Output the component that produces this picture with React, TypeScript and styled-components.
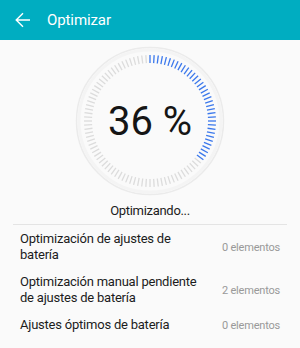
import React from "react";
import styled, { createGlobalStyle } from "styled-components";

const GlobalStyle = createGlobalStyle`
  html, body {
    margin: 0;
    padding: 0;
    background: #fafafa;
    font-family: Roboto, "Noto Sans", sans-serif;
  }
`;

const TICKS = 100;
const PROGRESS = 36;

const rows = [
  { label: "Optimización de ajustes de batería", count: "0 elementos" },
  { label: "Optimización manual pendiente de ajustes de batería", count: "2 elementos" },
  { label: "Ajustes óptimos de batería", count: "0 elementos" },
];

const Dial: React.FC<{ value: number }> = ({ value }) => {
  const lines = [];
  for (let i = 0; i < TICKS; i++) {
    const a = (i / TICKS) * Math.PI * 2;
    const s = Math.sin(a);
    const c = Math.cos(a);
    lines.push(
      <line
        key={i}
        x1={75 + s * 58}
        y1={75 - c * 58}
        x2={75 + s * 66}
        y2={75 - c * 66}
        stroke={i < value ? "#3b78ec" : "#dcdcdc"}
        strokeWidth={1.3}
      />
    );
  }
  return (
    <DialBox>
      <svg width="150" height="150" viewBox="0 0 150 150">
        <circle cx="75" cy="75" r="73.5" fill="none" stroke="#ebebeb" strokeWidth="1.5" />
        <circle cx="75" cy="75" r="71" fill="none" stroke="#f4f4f4" strokeWidth="3" />
        {lines}
      </svg>
      <Percent>{value} %</Percent>
    </DialBox>
  );
};

export default function App() {
  return (
    <>
      <GlobalStyle />
      <Page>
        <Header>
          <BackButton>
            <svg width="16" height="16" viewBox="0 0 16 16" fill="none">
              <path d="M15 8H1.5M8 1.2L1.2 8L8 14.8" stroke="#fff" strokeWidth="1.4" />
            </svg>
          </BackButton>
          <Title>Optimizar</Title>
        </Header>
        <DialSection>
          <Dial value={PROGRESS} />
          <Status>Optimizando...</Status>
        </DialSection>
        <Divider />
        <List>
          {rows.map((r) => (
            <Row key={r.label}>
              <Label>{r.label}</Label>
              <Count>{r.count}</Count>
            </Row>
          ))}
        </List>
      </Page>
    </>
  );
}

const Page = styled.div`
  width: 300px;
  height: 348px;
  overflow: hidden;
  background: #fafafa;
`;

const Header = styled.div`
  height: 40px;
  background: #00adc1;
  display: flex;
  align-items: center;
  padding-left: 15px;
  box-sizing: border-box;
`;

const BackButton = styled.div`
  width: 16px;
  height: 16px;
  display: flex;
`;

const Title = styled.div`
  margin-left: 16px;
  color: #fff;
  font-size: 15px;
  letter-spacing: -0.1px;
`;

const DialSection = styled.div`
  display: flex;
  flex-direction: column;
  align-items: center;
  padding-top: 6px;
`;

const DialBox = styled.div`
  position: relative;
  width: 150px;
  height: 150px;
  svg {
    display: block;
  }
`;

const Percent = styled.div`
  position: absolute;
  inset: 0;
  display: flex;
  align-items: center;
  justify-content: center;
  font-size: 40px;
  color: #151515;
`;

const Status = styled.div`
  margin-top: 7px;
  font-size: 13px;
  line-height: 16px;
  letter-spacing: -0.3px;
  color: #1c1c1c;
`;

const Divider = styled.div`
  height: 1px;
  background: #e4e4e4;
  margin: 5px 13px 0;
`;

const List = styled.div`
  padding: 1px 20px 0;
`;

const Row = styled.div`
  display: flex;
  align-items: center;
  justify-content: space-between;
  padding: 5px 0 6px;
`;

const Label = styled.div`
  max-width: 185px;
  font-size: 13px;
  line-height: 16px;
  letter-spacing: -0.22px;
  color: #1c1c1c;
`;

const Count = styled.div`
  font-size: 11px;
  letter-spacing: -0.2px;
  color: #999;
`;
